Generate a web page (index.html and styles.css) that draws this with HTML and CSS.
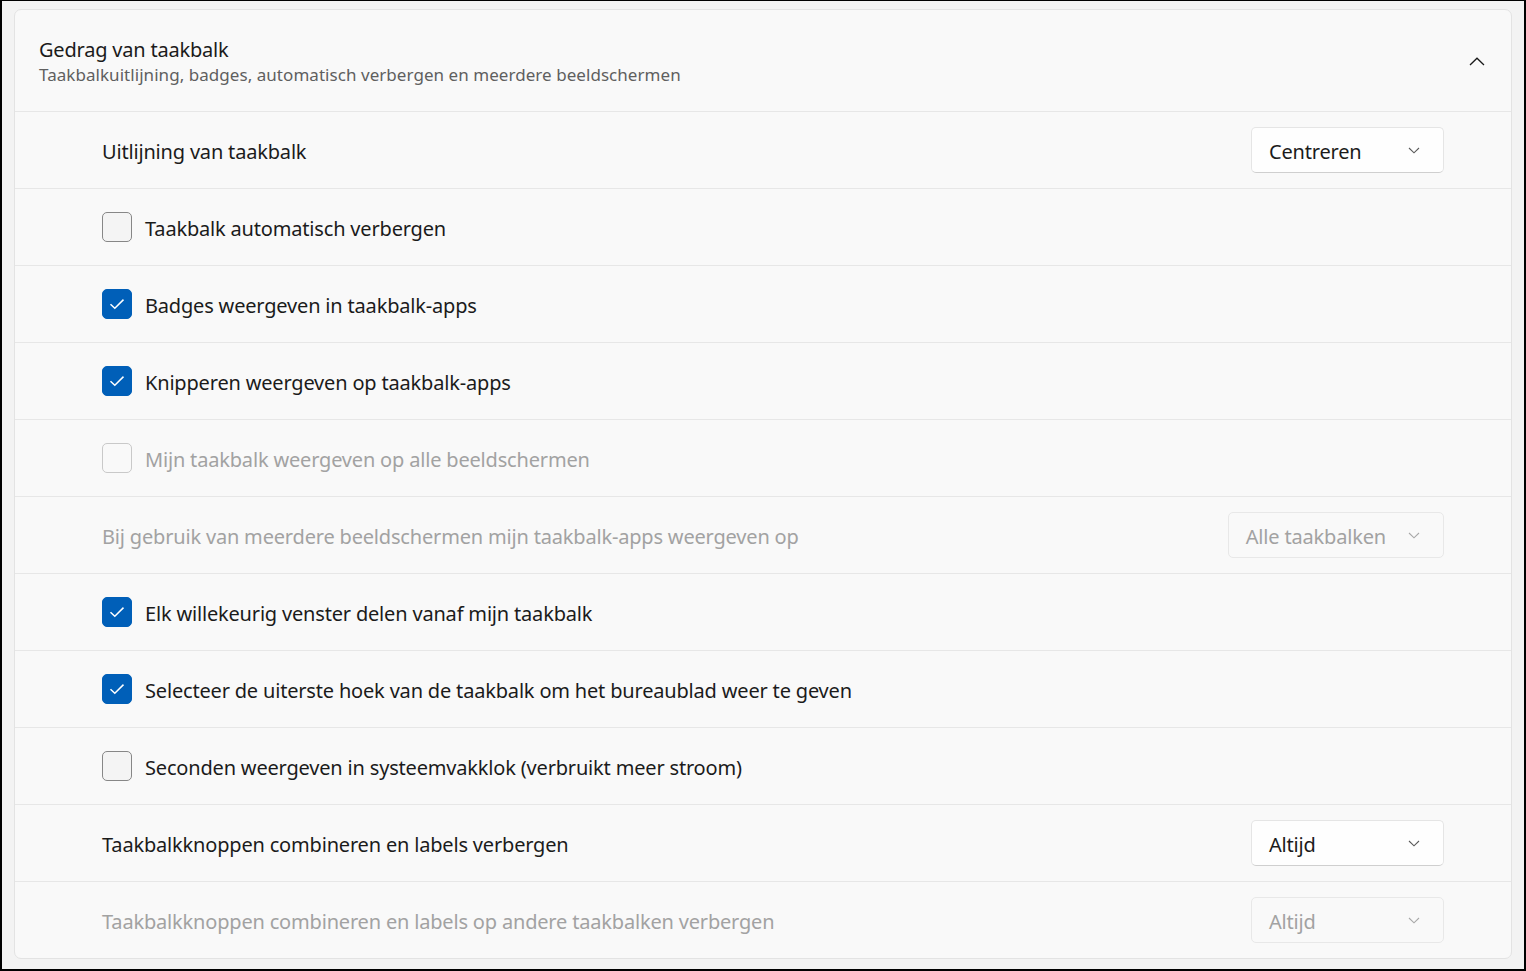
FILE: index.html
```html
<!DOCTYPE html>
<html lang="nl">
<head>
<meta charset="utf-8">
<title>Gedrag van taakbalk</title>
<link rel="stylesheet" href="styles.css">
</head>
<body>
<div class="frame">
  <section class="card">
    <header class="card-head">
      <div class="head-text">
        <div class="head-title">Gedrag van taakbalk</div>
        <div class="head-sub">Taakbalkuitlijning, badges, automatisch verbergen en meerdere beeldschermen</div>
      </div>
      <svg class="head-chevron" width="16" height="9" viewBox="0 0 16 9"><path d="M1 8 L8 1.2 L15 8" fill="none" stroke="#1b1b1b" stroke-width="1.3"/></svg>
    </header>

    <div class="row">
      <span class="label">Uitlijning van taakbalk</span>
      <div class="dropdown"><span class="dd-text">Centreren</span><svg class="dd-chev" width="12" height="7" viewBox="0 0 12 7"><path d="M1 1 L6 5.8 L11 1" fill="none" stroke="currentColor" stroke-width="1.1"/></svg></div>
    </div>

    <div class="row">
      <label class="check"><span class="box"></span><span class="label">Taakbalk automatisch verbergen</span></label>
    </div>

    <div class="row">
      <label class="check"><span class="box on"><svg width="16" height="12" viewBox="0 0 16 12"><path d="M1.5 6.2 L5.8 10.3 L14.5 1.6" fill="none" stroke="#fff" stroke-width="1.5"/></svg></span><span class="label">Badges weergeven in taakbalk-apps</span></label>
    </div>

    <div class="row">
      <label class="check"><span class="box on"><svg width="16" height="12" viewBox="0 0 16 12"><path d="M1.5 6.2 L5.8 10.3 L14.5 1.6" fill="none" stroke="#fff" stroke-width="1.5"/></svg></span><span class="label">Knipperen weergeven op taakbalk-apps</span></label>
    </div>

    <div class="row disabled">
      <label class="check"><span class="box"></span><span class="label">Mijn taakbalk weergeven op alle beeldschermen</span></label>
    </div>

    <div class="row disabled">
      <span class="label">Bij gebruik van meerdere beeldschermen mijn taakbalk-apps weergeven op</span>
      <div class="dropdown"><span class="dd-text">Alle taakbalken</span><svg class="dd-chev" width="12" height="7" viewBox="0 0 12 7"><path d="M1 1 L6 5.8 L11 1" fill="none" stroke="currentColor" stroke-width="1.1"/></svg></div>
    </div>

    <div class="row">
      <label class="check"><span class="box on"><svg width="16" height="12" viewBox="0 0 16 12"><path d="M1.5 6.2 L5.8 10.3 L14.5 1.6" fill="none" stroke="#fff" stroke-width="1.5"/></svg></span><span class="label">Elk willekeurig venster delen vanaf mijn taakbalk</span></label>
    </div>

    <div class="row">
      <label class="check"><span class="box on"><svg width="16" height="12" viewBox="0 0 16 12"><path d="M1.5 6.2 L5.8 10.3 L14.5 1.6" fill="none" stroke="#fff" stroke-width="1.5"/></svg></span><span class="label">Selecteer de uiterste hoek van de taakbalk om het bureaublad weer te geven</span></label>
    </div>

    <div class="row">
      <label class="check"><span class="box"></span><span class="label">Seconden weergeven in systeemvakklok (verbruikt meer stroom)</span></label>
    </div>

    <div class="row">
      <span class="label">Taakbalkknoppen combineren en labels verbergen</span>
      <div class="dropdown"><span class="dd-text">Altijd</span><svg class="dd-chev" width="12" height="7" viewBox="0 0 12 7"><path d="M1 1 L6 5.8 L11 1" fill="none" stroke="currentColor" stroke-width="1.1"/></svg></div>
    </div>

    <div class="row disabled">
      <span class="label">Taakbalkknoppen combineren en labels op andere taakbalken verbergen</span>
      <div class="dropdown"><span class="dd-text">Altijd</span><svg class="dd-chev" width="12" height="7" viewBox="0 0 12 7"><path d="M1 1 L6 5.8 L11 1" fill="none" stroke="currentColor" stroke-width="1.1"/></svg></div>
    </div>
  </section>
</div>
</body>
</html>
```
FILE: styles.css
```css
* { box-sizing: border-box; }
html, body { margin: 0; padding: 0; }
body {
  width: 1526px;
  height: 971px;
  background: #f3f3f3;
  font-family: "Noto Sans", "Open Sans", sans-serif;
  color: #1b1b1b;
  overflow: hidden;
}
.frame {
  height: 971px;
  border: 2px solid #000;
  border-top-width: 1px;
  border-left-width: 2px;
  padding: 8px 12px 9px 12px;
}
.card {
  background: #f9f9f9;
  border: 1px solid #e3e3e3;
  border-radius: 7px;
  overflow: hidden;
}
.card-head {
  height: 101px;
  display: flex;
  align-items: center;
  justify-content: space-between;
  padding: 0 26px 0 24px;
}
.head-text { display: flex; flex-direction: column; padding-top: 2px; }
.head-title {
  font-size: 20px;
  line-height: 26px;
  letter-spacing: -0.2px;
  color: #1b1b1b;
}
.head-sub {
  font-size: 17px;
  line-height: 23px;
  letter-spacing: 0.05px;
  color: #5f5f5f;
}
.head-chevron { margin-top: 2px; }
.row {
  height: 77px;
  border-top: 1px solid #e7e7e7;
  display: flex;
  align-items: center;
  justify-content: space-between;
  padding: 0 67px 0 87px;
  font-size: 20px;
  letter-spacing: -0.18px;
}
.label { line-height: 28px; padding-top: 3px; }
.check {
  display: flex;
  align-items: center;
  gap: 13px;
}
.box {
  width: 30px;
  height: 30px;
  border-radius: 5px;
  border: 1.5px solid #878787;
  background: #f4f4f4;
  display: flex;
  align-items: center;
  justify-content: center;
}
.box.on {
  background: #005fb8;
  border-color: #005fb8;
}
.dropdown {
  min-width: 193px;
  height: 46px;
  display: flex;
  align-items: center;
  justify-content: space-between;
  gap: 22px;
  padding: 0 23px 0 17px;
  background: #fefefe;
  border: 1px solid #e5e5e5;
  border-bottom-color: #cfcfcf;
  border-radius: 5px;
  color: #1b1b1b;
}
.dd-text { padding-top: 2px; }
.dd-chev { color: #5a5a5a; margin-top: 1px; }
.row.disabled { color: #a2a2a2; }
.row.disabled .box {
  background: #f9f9f9;
  border-color: #c9c9c9;
}
.row.disabled .dropdown {
  background: #f9f9f9;
  border-color: #e8e8e8;
  color: #a2a2a2;
}
.row.disabled .dd-chev { color: #a8a8a8; }
```
